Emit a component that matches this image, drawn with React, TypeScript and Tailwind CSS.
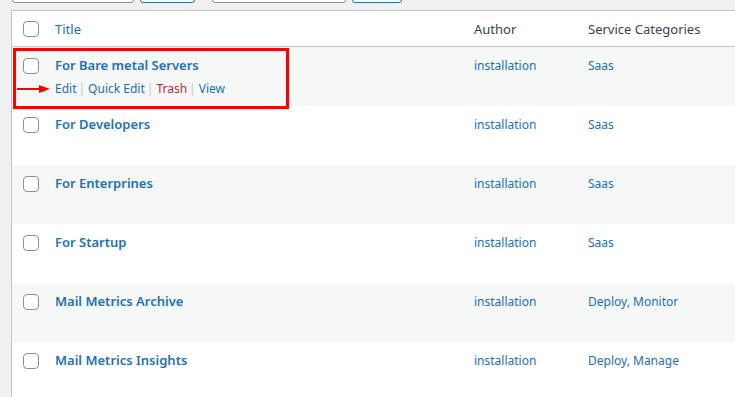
import React from "react";

const rows = [
  { title: "For Bare metal Servers", cats: "Saas", actions: true },
  { title: "For Developers", cats: "Saas" },
  { title: "For Enterprines", cats: "Saas" },
  { title: "For Startup", cats: "Saas" },
  { title: "Mail Metrics Archive", cats: "Deploy, Monitor" },
  { title: "Mail Metrics Insights", cats: "Deploy, Manage" },
];

function Box() {
  return <div className="w-4 h-4 rounded-[4px] border border-[#8c8f94] bg-white shrink-0" />;
}

function Sep() {
  return <span className="ml-[2px] mr-[3px] text-[#c3c4c7]">|</span>;
}

export default function App() {
  return (
    <div
      className="w-[735px] h-[397px] overflow-hidden bg-[#f0f0f1] text-[#3c434a]"
      style={{ fontFamily: '"Noto Sans", "Open Sans", sans-serif' }}
    >
      <div className="flex items-end -mt-[28px] h-[31px]">
        <div className="ml-[12px] w-[122px] h-[31px] rounded-[3px] border border-[#8c8f94] bg-white" />
        <div className="ml-[6px] w-[55px] h-[31px] rounded-[3px] border border-[#2271b1] bg-[#f6f7f7]" />
        <div className="ml-[17px] w-[134px] h-[31px] rounded-[3px] border border-[#8c8f94] bg-white" />
        <div className="ml-[6px] w-[50px] h-[31px] rounded-[3px] border border-[#2271b1] bg-[#f6f7f7]" />
      </div>
      <div className="ml-[11px] mt-[7px] w-[740px] border-l border-t border-[#c3c4c7] bg-white">
        <div className="flex items-center h-[36px] border-b border-[#c3c4c7] text-[13px]">
          <div className="w-[43px] pl-[11px] flex items-center"><Box /></div>
          <div className="w-[419px] pt-[2px] text-[#2271b1]">Title</div>
          <div className="w-[114px] pt-[2px]">Author</div>
          <div className="pt-[2px]">Service Categories</div>
        </div>
        {rows.map((r, i) => (
          <div
            key={r.title}
            className={`relative flex h-[59px] text-[12px] ${i % 2 === 0 ? "bg-[#f6f7f7]" : "bg-white"}`}
          >
            <div className="w-[43px] pl-[11px] pt-[11px]"><Box /></div>
            <div className="w-[419px] pt-[8px]">
              <div className="text-[13px] font-semibold text-[#2271b1] leading-[20px]">{r.title}</div>
              {r.actions && (
                <div className="mt-[5px] flex items-center text-[12px] leading-[18px] text-[#2271b1]">
                  <span>Edit</span>
                  <Sep />
                  <span>Quick Edit</span>
                  <Sep />
                  <span className="text-[#b32d2e]">Trash</span>
                  <Sep />
                  <span>View</span>
                </div>
              )}
            </div>
            <div className="w-[114px] pt-[10px] leading-[18px] text-[#2271b1]">installation</div>
            <div className="pt-[10px] leading-[18px] text-[#2271b1]">{r.cats}</div>
            {r.actions && (
              <>
                <div className="absolute left-[1px] top-[1px] w-[276px] h-[61px] border-[3px] border-[#ff0000] z-10" />
                <svg className="absolute left-[5px] top-[37px] z-10" width="34" height="10" viewBox="0 0 34 10">
                  <line x1="0" y1="5" x2="24" y2="5" stroke="#ff0000" strokeWidth="2" />
                  <polygon points="22,1 33,5 22,9" fill="#ff0000" />
                </svg>
              </>
            )}
          </div>
        ))}
      </div>
    </div>
  );
}
